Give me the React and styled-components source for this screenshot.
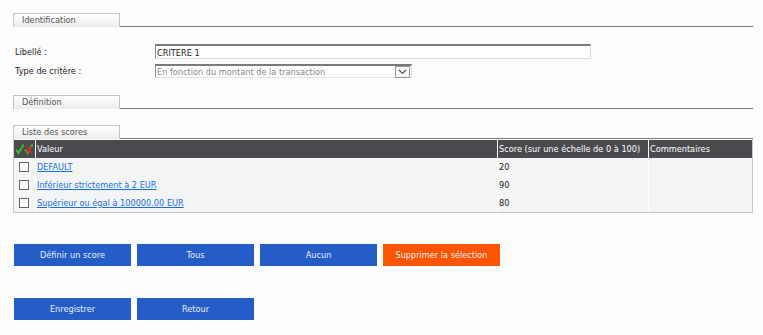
import React from 'react';
import styled, { createGlobalStyle } from 'styled-components';

const GlobalStyle = createGlobalStyle`
  body {
    margin: 0;
    background: #fdfdfd;
    font-family: "DejaVu Sans", Verdana, sans-serif;
    font-size: 8.2px;
    color: #222;
  }
`

const Page = styled.div`
  padding: 13px 10px 0 13px;
`

// Section header: tab on the left, rule to the right
const SectionHeader = styled.div`
  display: flex;
  align-items: flex-end;
  margin-top: ${props => props.$top || 0}px;
`

const Tab = styled.div`
  box-sizing: border-box;
  width: 107px;
  height: 14px;
  padding-left: 8px;
  line-height: 13px;
  color: #555;
  border: 1px solid #c4c4c4;
  border-bottom: none;
  background: linear-gradient(#ffffff, #ececec);
`

const Rule = styled.div`
  flex: 1;
  border-bottom: 1px solid #777;
`

const Form = styled.div`
  display: grid;
  grid-template-columns: 140px auto;
  row-gap: 5px;
  align-items: center;
  margin: 17px 0 0 2px;
`

const Label = styled.label`
  color: #222;
`

const TextInput = styled.div`
  box-sizing: border-box;
  width: 436px;
  height: 15px;
  padding: 1px 1px 0;
  line-height: 12px;
  background: #fff;
  border: 1px solid #dcdcdc;
  border-top: 2px solid #7a7a7a;
  border-left: 1px solid #8a8a8a;
`

const Select = styled.div`
  box-sizing: border-box;
  display: flex;
  align-items: center;
  justify-content: space-between;
  width: 257px;
  height: 14px;
  padding-left: 1px;
  line-height: 12px;
  color: #888;
  background: #fff;
  border: 1px solid #dcdcdc;
  border-top: 2px solid #7a7a7a;
  border-left: 1px solid #8a8a8a;
  border-bottom-color: #e4e4e4;
`

const SelectArrow = styled.span`
  box-sizing: border-box;
  display: flex;
  align-items: center;
  justify-content: center;
  width: 15px;
  height: 12px;
  margin-right: 1px;
  border: 1px solid #999;
  background: #f8f8f8;
`

const Table = styled.div`
  display: grid;
  grid-template-columns: 21px 462px 151px 1fr;
  border: 1px solid #c8c8c8;
  border-top: none;
  background: #fff;
`

const HeadCell = styled.div`
  height: 18px;
  margin-top: 1px;
  padding-left: 1px;
  color: #fff;
  background: #4b4b4f;
  border-left: ${props => (props.$first ? 'none' : '1px solid #fff')};
  display: flex;
  align-items: center;
`

const Cell = styled.div`
  height: 18px;
  padding-left: ${props => (props.$first ? '5px' : '1px')};
  background: #f3f4f6;
  border-left: ${props => (props.$first ? 'none' : '1px solid #fff')};
  display: flex;
  align-items: center;
`

const Box = styled.span`
  box-sizing: border-box;
  width: 10px;
  height: 10px;
  border: 1px solid #666;
  background: #fff;
`

const Link = styled.a`
  color: #1a6fd6;
  text-decoration: underline;
  cursor: pointer;
`

const ButtonRow = styled.div`
  display: flex;
  gap: 6px;
  margin: ${props => props.$top}px 0 0 1px;
`

const Button = styled.button`
  width: 117px;
  height: 22px;
  border: none;
  padding: 0;
  font-family: "DejaVu Sans", Verdana, sans-serif;
  font-size: 8.2px;
  color: #e9edf7;
  background: ${props => (props.$danger ? '#ff5500' : '#245dc8')};
  cursor: pointer;
`

const CheckAll = () => (
  <svg width="19" height="12" viewBox="0 0 19 12">
    <path d="M1 6.5 L3.5 10 L8.5 1.5" fill="none" stroke="#2fbf2f" strokeWidth="2" />
    <path d="M10 6.5 L12.5 10 L17.5 1.5" fill="none" stroke="#2fbf2f" strokeWidth="2" />
    <path d="M11 3.5 L17 10 M17 3.5 L11 10" fill="none" stroke="#e02020" strokeWidth="1.3" />
  </svg>
);

const Chevron = () => (
  <svg width="9" height="6" viewBox="0 0 9 6">
    <path d="M1 1 L4.5 4.5 L8 1" fill="none" stroke="#555" strokeWidth="1.2" />
  </svg>
);

const scores = [
  { label: 'DEFAULT', score: '20' },
  { label: 'Inférieur strictement à 2 EUR', score: '90' },
  { label: 'Supérieur ou égal à 100000.00 EUR', score: '80' },
];

const App = () => {
  return (
    <Page>
      <GlobalStyle />
      <SectionHeader>
        <Tab>Identification</Tab>
        <Rule />
      </SectionHeader>

      <Form>
        <Label>Libellé :</Label>
        <TextInput>CRITERE 1</TextInput>
        <Label>Type de critère :</Label>
        <Select>
          <span>En fonction du montant de la transaction</span>
          <SelectArrow><Chevron /></SelectArrow>
        </Select>
      </Form>

      <SectionHeader $top={17}>
        <Tab>Définition</Tab>
        <Rule />
      </SectionHeader>

      <SectionHeader $top={16}>
        <Tab>Liste des scores</Tab>
        <Rule />
      </SectionHeader>

      <Table>
        <HeadCell $first><CheckAll /></HeadCell>
        <HeadCell>Valeur</HeadCell>
        <HeadCell>Score (sur une échelle de 0 à 100)</HeadCell>
        <HeadCell>Commentaires</HeadCell>
        {scores.map(row => (
          <React.Fragment key={row.label}>
            <Cell $first><Box /></Cell>
            <Cell><Link>{row.label}</Link></Cell>
            <Cell>{row.score}</Cell>
            <Cell />
          </React.Fragment>
        ))}
      </Table>

      <ButtonRow $top={31}>
        <Button>Définir un score</Button>
        <Button>Tous</Button>
        <Button>Aucun</Button>
        <Button $danger>Supprimer la sélection</Button>
      </ButtonRow>

      <ButtonRow $top={32}>
        <Button>Enregistrer</Button>
        <Button>Retour</Button>
      </ButtonRow>
    </Page>
  );
};

export default App;
